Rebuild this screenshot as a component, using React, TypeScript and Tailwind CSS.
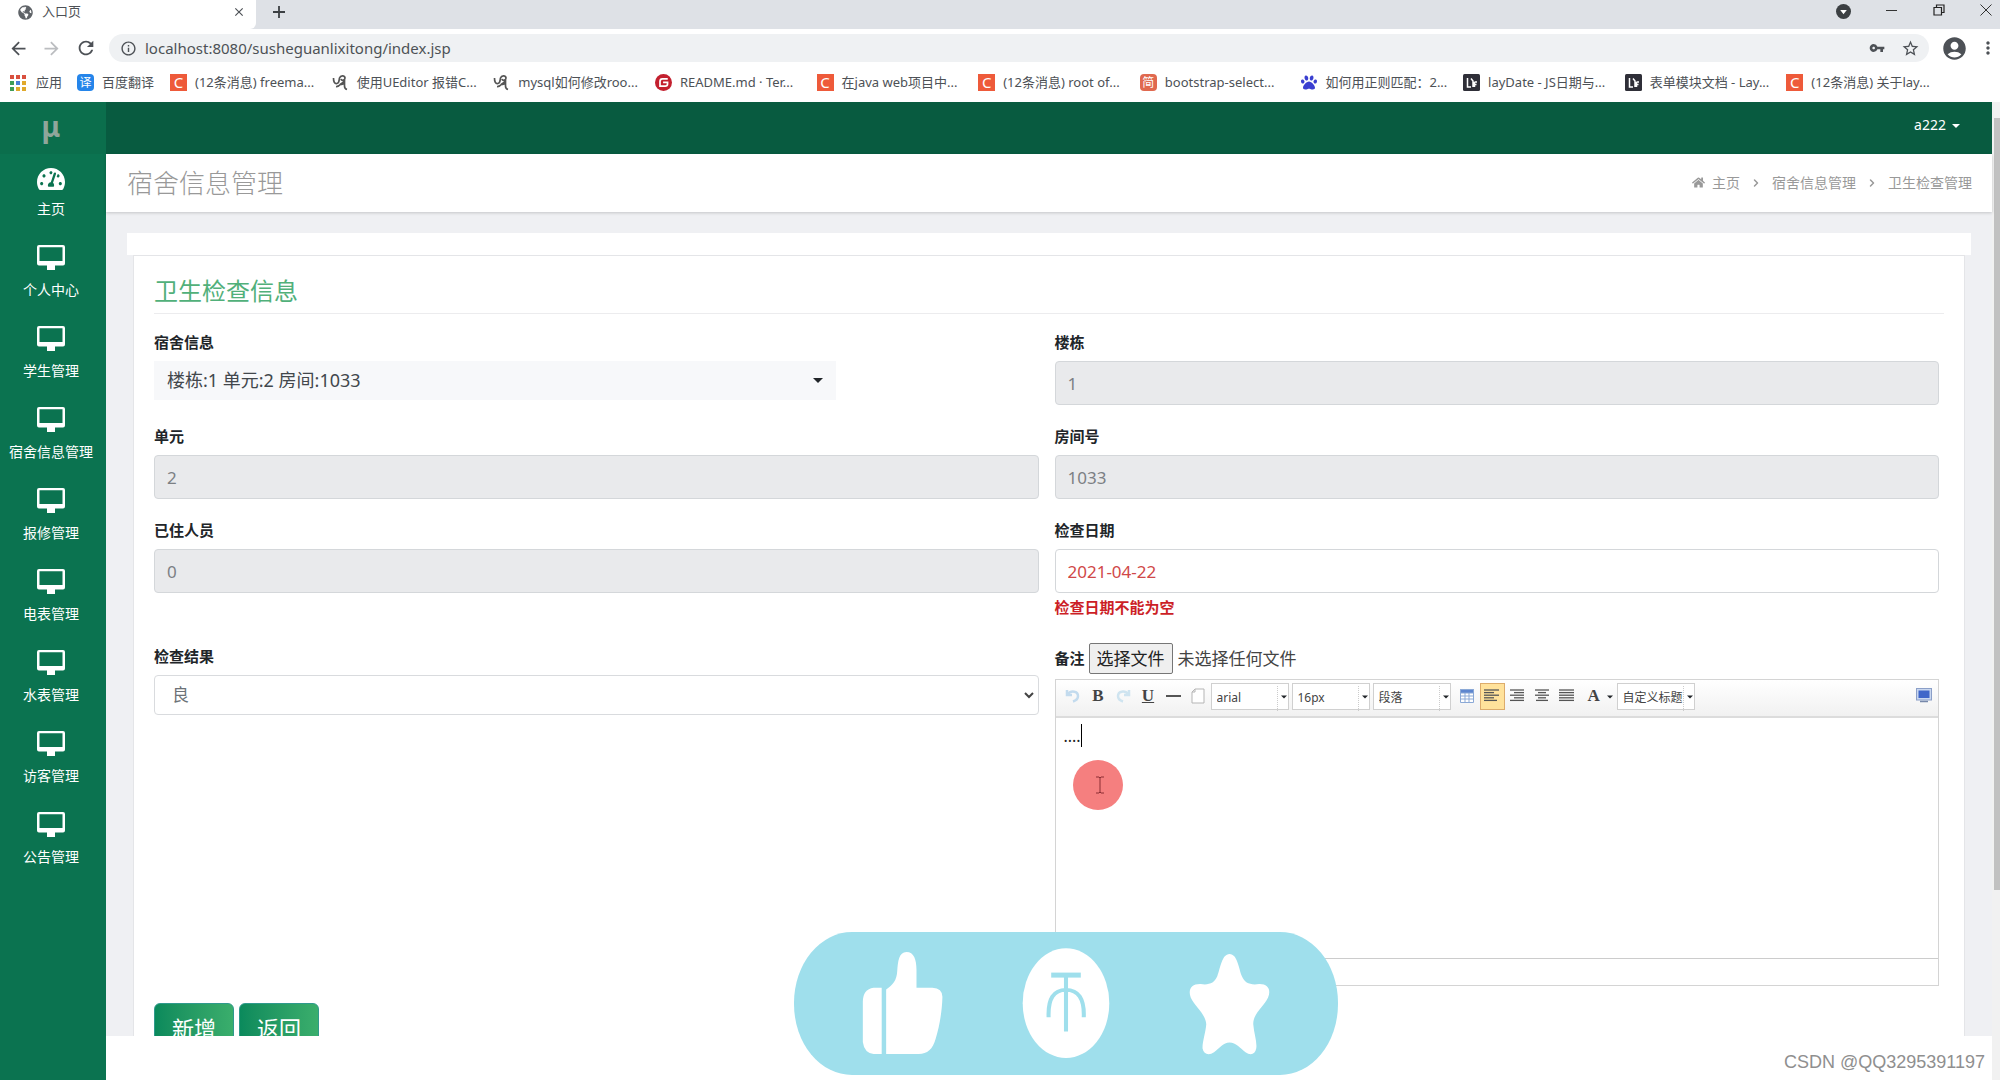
import {
  FaHome,
  FaPaw,
  FaTachometerAlt,
  FaGlobeAmericas,
} from "react-icons/fa";
import {
  MdAccountCircle,
  MdArrowBack,
  MdArrowForward,
  MdClose,
  MdInfoOutline,
  MdMoreVert,
  MdRefresh,
  MdStarBorder,
  MdVpnKey,
} from "react-icons/md";
import { ChevronRight } from "lucide-react";

const bookmarks = [
  { icon: "c", text: "(12条消息) freema..." },
  { icon: "ue", text: "使用UEditor 报错C..." },
  { icon: "ue", text: "mysql如何修改roo..." },
  { icon: "gitee", text: "README.md · Ter..." },
  { icon: "c", text: "在java web项目中..." },
  { icon: "c", text: "(12条消息) root of..." },
  { icon: "jian", text: "bootstrap-select..." },
  { icon: "paw", text: "如何用正则匹配：2..." },
  { icon: "lay", text: "layDate - JS日期与..." },
  { icon: "lay", text: "表单模块文档 - Lay..." },
  { icon: "c", text: "(12条消息) 关于lay..." },
];

const menu = [
  "主页",
  "个人中心",
  "学生管理",
  "宿舍信息管理",
  "报修管理",
  "电表管理",
  "水表管理",
  "访客管理",
  "公告管理",
];

const appDots = [
  "bg-[#d9503f]", "bg-[#d9503f]", "bg-[#d9503f]",
  "bg-[#3f9d58]", "bg-[#4a7fd8]", "bg-[#e0a92c]",
  "bg-[#3f9d58]", "bg-[#e0a92c]", "bg-[#e0a92c]",
];

const labelClass = "block h-5 text-[15px] leading-5 font-bold text-[#212529]";
const inputClass =
  "mt-[9px] block h-[44px] w-full rounded border border-[#d4d7da] px-3 text-[17px] outline-none";

function BookmarkIcon({ type }: { type: string }) {
  if (type === "c")
    return <span className="flex h-[17px] w-[17px] shrink-0 items-center justify-center bg-[#ee5a3a] text-[15px] leading-none text-white">C</span>;
  if (type === "jian")
    return <span className="flex h-[17px] w-[17px] shrink-0 items-center justify-center rounded-sm bg-[#e0694f] text-xs leading-none text-white">简</span>;
  if (type === "gitee")
    return (
      <svg viewBox="0 0 16 16" className="h-[17px] w-[17px] shrink-0">
        <circle cx="8" cy="8" r="8" fill="#c3202f" />
        <path d="M12 4.6H7Q4.7 4.6 4.7 7v4.4H9.6Q11.8 11.4 11.8 9.4V7.8H7.6" fill="none" stroke="#fff" strokeWidth="1.6" />
      </svg>
    );
  if (type === "paw") return <FaPaw className="h-[17px] w-4 shrink-0 text-[#3a3fd0]" />;
  if (type === "lay")
    return (
      <svg viewBox="0 0 17 17" className="h-[17px] w-[17px] shrink-0">
        <rect width="17" height="17" rx="1.5" fill="#2f2f38" />
        <path d="M4.500 4V13H8M8 4.500L10 7V13M11.500 8H14M11.500 8V13M11.500 10.500H13.500" fill="none" stroke="#fff" strokeWidth="1.500" />
      </svg>
    );
  return (
    <svg viewBox="0 0 17 17" className="h-[17px] w-[17px] shrink-0" fill="none" stroke="#555" strokeWidth="1.700">
      <path d="M1.500 4C1.500 8 2.500 10 5 9.500S7 6 7.500 4C8.500 1.500 12.500 1 13 4C13 6.500 9.500 7 9 5M4 12.500C8 13 9 9 12.500 7V12C12.500 14 13.500 15 15 15.500M8 9.500C9.500 11 11 10.500 12.500 9" />
    </svg>
  );
}

function Browser() {
  return (
    <header className="shrink-0 bg-white text-[#4d5156]">
      <div className="flex h-[29px] bg-[#dee1e6]">
        <div className="flex w-64 items-center rounded-br-md bg-white pr-[10px] pb-[5px] pl-[18px]">
          <FaGlobeAmericas className="h-[15px] w-[15px] text-[#5f6368]" />
          <span className="ml-[9px] flex-1 text-[13px]">入口页</span>
          <button aria-label="关闭标签页"><MdClose className="h-[14px] w-[14px]" /></button>
        </div>
        <button aria-label="新标签页" className="ml-4 pb-[5px]">
          <svg viewBox="0 0 14 14" className="h-[14px] w-[14px]" stroke="#3c4043" strokeWidth="1.800"><path d="M7 1V13M1 7H13" /></svg>
        </button>
        <div className="ml-auto flex items-center gap-[35px] pr-2 pb-[10px]">
          <svg viewBox="0 0 16 16" className="mt-1 h-[15px] w-[15px]"><circle cx="8" cy="8" r="8" fill="#3c4043" /><path d="M4.500 6.500H11.500L8 11Z" fill="#fff" /></svg>
          <svg viewBox="0 0 12 12" className="h-3 w-3" stroke="#333"><path d="M0 6.500H11" /></svg>
          <svg viewBox="0 0 12 12" className="h-3 w-3" fill="none" stroke="#222" strokeWidth="1.200"><path d="M1 3.500H8.500V11H1ZM3.500 3.500V1H11V8.500H8.500" /></svg>
          <svg viewBox="0 0 12 12" className="h-3 w-3" stroke="#333"><path d="M.5.5L11.500 11.500M11.500.5L.5 11.500" /></svg>
        </div>
      </div>
      <div className="flex h-[37px] items-center pt-px pr-[2px] pl-2">
        <MdArrowBack className="h-[21px] w-[21px]" />
        <MdArrowForward className="ml-3 h-[21px] w-[21px] text-[#bbbdc0]" />
        <MdRefresh className="ml-[13px] h-[22px] w-[22px]" />
        <div className="ml-3 flex h-7 flex-1 items-center rounded-full bg-[#eff1f3] pr-[9px] pl-[11px]">
          <MdInfoOutline className="h-[17px] w-[17px]" />
          <input
            aria-label="地址"
            readOnly
            value="localhost:8080/susheguanlixitong/index.jsp"
            className="ml-2 flex-1 bg-transparent text-[15px] outline-none"
          />
          <MdVpnKey className="h-4 w-4" />
          <MdStarBorder className="ml-4 h-[19px] w-[19px]" />
        </div>
        <MdAccountCircle className="ml-3 h-[27px] w-[27px]" />
        <MdMoreVert className="ml-[10px] h-5 w-5" />
      </div>
      <nav className="flex h-9 items-center pr-[52px] pb-[3px] pl-[10px] text-[13px]">
        <a href="#" className="flex w-[67px] items-center gap-[10px]">
          <span className="grid grid-cols-3 gap-[2px]">
            {appDots.map((c, i) => <i key={i} className={`h-1 w-1 ${c}`} />)}
          </span>
          应用
        </a>
        <a href="#" className="flex w-[93px] items-center gap-2">
          <span className="flex h-[17px] w-[17px] items-center justify-center rounded-sm bg-[#2585ea] text-xs text-white">译</span>
          百度翻译
        </a>
        <div className="grid flex-1 grid-cols-11">
          {bookmarks.map((b, i) => (
            <a key={i} href="#" className="flex items-center gap-2 whitespace-nowrap">
              <BookmarkIcon type={b.icon} />
              {b.text}
            </a>
          ))}
        </div>
      </nav>
    </header>
  );
}

function Sidebar() {
  return (
    <aside className="w-[106px] shrink-0 bg-[#0b7350] text-center text-white">
      <div className="flex h-[52px] items-center justify-center bg-[#0b6e4c] pr-1 pb-1 text-[28px] font-bold text-[#8fa69b]">μ</div>
      {menu.map((m, i) => (
        <a key={m} href="#" className="flex h-[81px] flex-col items-center pr-1 pt-[11px] text-[14px]">
          {i === 0 ? (
            <FaTachometerAlt className="h-[28px] w-[28px]" />
          ) : (
            <svg viewBox="0 2 28 28" className="h-[28px] w-[28px] overflow-visible" fill="currentColor">
              <path fillRule="evenodd" d="M2 1H26Q28 1 28 3V19.500Q28 21.500 26 21.500H18V26H10V21.500H2Q0 21.500 0 19.500V3Q0 1 2 1ZM2.500 3.200V17H25.500V3.200Z" />
            </svg>
          )}
          <span className="mt-[6px] leading-5">{m}</span>
        </a>
      ))}
    </aside>
  );
}

function Caret({ className = "" }: { className?: string }) {
  return <svg viewBox="0 0 10 5" className={`pointer-events-none absolute ${className}`} fill="#212529"><path d="M0 0H10L5 5Z" /></svg>;
}

function Field({ id, label, value }: { id: string; label: string; value: string }) {
  return (
    <div>
      <label htmlFor={id} className={labelClass}>{label}</label>
      <input id={id} readOnly value={value} className={`${inputClass} bg-[#e9eaec] text-[#7c8084]`} />
    </div>
  );
}

function ToolSelect({ label, value }: { label: string; value: string }) {
  return (
    <div className="relative h-[27px] w-[78px] border border-[#d0d0d0] bg-white">
      <select aria-label={label} className="h-full w-[66px] appearance-none overflow-hidden border-r border-dotted border-[#ccc] pl-[5px] text-xs text-[#444] outline-none">
        <option>{value}</option>
      </select>
      <Caret className="top-[11px] right-[1px] h-[4px] w-[6px]" />
    </div>
  );
}

function AlignIcon({ rows }: { rows: number[][] }) {
  return (
    <svg viewBox="0 0 16 13" className="h-[13px] w-4" stroke="#555" strokeWidth="1.300">
      {rows.map(([x1, x2], i) => <path key={i} d={`M${x1} ${1 + i * 2.6}H${x2}`} />)}
    </svg>
  );
}

const toolButton = "flex h-[25px] w-[25px] items-center justify-center text-[#444]";

function Editor() {
  return (
    <div className="relative mt-[5px] border border-[#d4d4d4] bg-white">
      <div className="flex h-[38px] border-b-2 border-[#dcdcdc] bg-gradient-to-b from-white to-[#f1f1f1] pt-[3px] pr-[2px] pl-[5px]">
        <button aria-label="撤销" className={toolButton}>
          <svg viewBox="0 0 16 16" className="h-4 w-4" fill="none" stroke="#c3dbee" strokeWidth="2.500"><path d="M2 2V7H7M2.500 6.500C6 2 13 3 13 8Q13 12 8 13.500" /></svg>
        </button>
        <button aria-label="加粗" className={`${toolButton} font-["Liberation_Serif",serif] text-[17px] font-bold`}>B</button>
        <button aria-label="重做" className={toolButton}>
          <svg viewBox="0 0 16 16" className="h-4 w-4" fill="none" stroke="#cfe4f0" strokeWidth="2.500"><path d="M14 2V7H9M13.500 6.500C10 2 3 3 3 8Q3 12 8 13.500" /></svg>
        </button>
        <button aria-label="下划线" className={`${toolButton} font-["Liberation_Serif",serif] text-[17px] font-bold underline`}>U</button>
        <button aria-label="分隔线" className={toolButton}><span className="h-[2px] w-[15px] bg-[#555]" /></button>
        <button aria-label="清空文档" className={toolButton}>
          <svg viewBox="0 0 14 16" className="h-4 w-[14px]" fill="#fff" stroke="#b5b5b5"><path d="M1 4L4 1H13V15H1ZM1 4H4V1" /></svg>
        </button>
        <div className="flex gap-[3px]">
          <ToolSelect label="字体" value="arial" />
          <ToolSelect label="字号" value="16px" />
          <ToolSelect label="段落格式" value="段落" />
        </div>
        <button aria-label="插入表格" className={`${toolButton} ml-1`}>
          <svg viewBox="0 0 14 14" className="h-[14px] w-[14px]" fill="#fff" stroke="#8ba9d6"><path d="M.5.5H13.500V13.500H.5ZM.5 7H13.500M.5 10H13.500M5 4V13.500M9 4V13.500" /><path d="M.5.5H13.500V4H.5Z" fill="#5d86cf" /></svg>
        </button>
        <button aria-label="居左对齐" className="flex h-[27px] w-[25px] items-start justify-center border border-[#dcac6c] bg-[#ffe29b] pt-[5px]">
          <AlignIcon rows={[[0, 15], [0, 10], [0, 15], [0, 10], [0, 13]]} />
        </button>
        <button aria-label="居右对齐" className={toolButton}>
          <AlignIcon rows={[[1, 15], [5, 15], [1, 15], [5, 15], [1, 15]]} />
        </button>
        <button aria-label="居中对齐" className={toolButton}>
          <AlignIcon rows={[[1, 15], [4, 12], [1, 15], [4, 12], [2, 14]]} />
        </button>
        <button aria-label="两端对齐" className={toolButton}>
          <AlignIcon rows={[[0, 15], [0, 15], [0, 15], [0, 15], [0, 15]]} />
        </button>
        <button aria-label="字体颜色" className='relative h-[25px] w-[37px] pl-2 text-left font-["Liberation_Serif",serif] text-[17px] leading-[25px] font-bold text-[#444]'>
          A
          <Caret className="top-[12px] right-[4px] h-[4px] w-[6px]" />
        </button>
        <ToolSelect label="自定义标题" value="自定义标题" />
        <button aria-label="全屏" className={`${toolButton} ml-auto`}>
          <svg viewBox="0 0 16 15" className="h-[15px] w-4"><rect x=".5" y=".5" width="15" height="11.500" fill="#c9d7ef" stroke="#8b9fc8" /><rect x="2.500" y="2.500" width="11" height="7.500" fill="#3f66c9" /><path d="M4 13.500H12" stroke="#7788aa" strokeWidth="1.500" /></svg>
        </button>
      </div>
      <textarea
        aria-label="备注内容"
        defaultValue="...."
        className="block h-[240px] w-full resize-none px-2 py-[6px] text-[16px] leading-6 text-[#222] outline-none"
      />
      <span className="absolute top-[44px] left-[25px] h-[23px] w-px bg-black" />
      <span className="absolute top-[80px] left-[17px] flex h-[50px] w-[50px] items-center justify-center rounded-full bg-[#f57f7f]">
        <svg viewBox="0 0 10 18" className="ml-1 h-[18px] w-[10px]" fill="none" stroke="#8c2f35"><path d="M1 1H4L5 2L6 1H9M5 2V16M1 17H4L5 16L6 17H9" /></svg>
      </span>
      <div className="h-[27px] border-t border-[#ccc]" />
    </div>
  );
}

const actionClass =
  "h-[50px] w-[80px] rounded-md border border-[#2f9a8c] bg-gradient-to-r from-[#0a8a5c] to-[#3aae6c] text-[22px] text-white";

function CheckForm() {
  return (
    <form className="mx-[6px] flex-1 border border-b-0 border-[#e4e5e8] bg-white px-5">
      <h2 className="mt-[17px] h-[41px] border-b border-[#ececee] text-[24px] leading-9 text-[#51b07a]">卫生检查信息</h2>
      <div className="mt-[18px] mr-[5px] grid grid-cols-2 gap-x-4 gap-y-[21px]">
        <div>
          <label htmlFor="room" className={labelClass}>宿舍信息</label>
          <div className="relative mt-[9px] w-[682px]">
            <select id="room" className="h-[39px] w-full appearance-none bg-[#f7f8fa] px-[13px] text-[18px] text-[#42474c] outline-none">
              <option>楼栋:1 单元:2 房间:1033</option>
            </select>
            <Caret className="top-[17px] right-[13px] h-[5px] w-[10px]" />
          </div>
        </div>
        <Field id="building" label="楼栋" value="1" />
        <Field id="unit" label="单元" value="2" />
        <Field id="number" label="房间号" value="1033" />
        <Field id="people" label="已住人员" value="0" />
        <div>
          <label htmlFor="date" className={labelClass}>检查日期</label>
          <input id="date" defaultValue="2021-04-22" className={`${inputClass} text-[#d04848]`} />
          <p className="mt-1 h-5 text-[15px] leading-5 font-bold text-[#cc1f27]">检查日期不能为空</p>
        </div>
        <div className="mt-2">
          <label htmlFor="result" className={labelClass}>检查结果</label>
          <div className="relative mt-[9px]">
            <select id="result" className="h-[40px] w-full appearance-none rounded border border-[#d9dbde] px-[17px] text-[17px] text-[#6c7277] outline-none">
              <option>良</option>
            </select>
            <svg viewBox="0 0 10 7" className="pointer-events-none absolute top-[17px] right-[5px] h-[7px] w-[10px]" fill="none" stroke="#444" strokeWidth="2"><path d="M1 1L5 5L9 1" /></svg>
          </div>
        </div>
        <div className="mt-[5px]">
          <div className="flex h-[31px] items-center">
            <span className="text-[15px] font-bold text-[#212529]">备注</span>
            <input id="file" type="file" className="sr-only" />
            <label htmlFor="file" className="ml-1 flex h-[31px] w-[84px] items-center justify-center rounded-xs border border-[#767676] bg-[#efefef] text-[17px] text-[#222]">选择文件</label>
            <span className="ml-[5px] text-[17px] text-[#444]">未选择任何文件</span>
          </div>
          <Editor />
        </div>
      </div>
      <div className="mt-[17px] flex gap-[5px]">
        <button type="button" className={actionClass}>新增</button>
        <button type="button" className={actionClass}>返回</button>
      </div>
    </form>
  );
}

function LikeBanner() {
  return (
    <div className="absolute bottom-[5px] left-[794px] h-[143px] w-[544px] rounded-[58px/71px] bg-[#9fdfec]">
      <svg viewBox="38 36 1470 428" preserveAspectRatio="none" className="h-full w-full" fill="#fff">
        <path d="M275 203H253Q224 208 224 245V365Q228 398 253 401H275Z" />
        <path d="M287 401V208C305 195 316 180 317 152C319 125 321 96 342 96C362 96 369 118 369 150V203H412Q440 205 439 232C438 270 432 315 421 355C413 388 398 401 375 401Z" />
        <ellipse cx="773" cy="249" rx="117" ry="164" />
        <g fill="none" stroke="#9fdfec">
          <path d="M733 165H813" strokeWidth="15" />
          <path d="M773 165V334M726 291C724 235 740 209 773 209S823 235 821 291" strokeWidth="11" />
        </g>
        <path d="M1215 102C1236 102 1240 145 1248 168C1256 190 1270 195 1295 192C1318 191 1328 209 1319 232C1309 258 1278 280 1279 312C1281 340 1290 365 1287 385C1284 402 1272 407 1258 396C1242 383 1233 367 1215 367S1190 383 1173 396C1159 407 1145 402 1142 385C1141 365 1150 340 1152 312C1150 280 1120 258 1110 232C1102 209 1112 191 1137 192C1160 195 1174 190 1182 168C1190 145 1194 102 1215 102Z" />
      </svg>
    </div>
  );
}

export default function App() {
  return (
    <div className='relative flex h-screen flex-col overflow-hidden bg-white font-["Noto_Sans","Noto_Sans_CJK_SC",sans-serif]'>
      <Browser />
      <div className="flex min-h-0 flex-1">
        <Sidebar />
        <div className="flex min-w-0 flex-1 flex-col">
          <div className="flex h-[52px] shrink-0 items-start justify-end bg-[#085b40] pt-3 pr-8">
            <button className="relative pr-[14px] text-[14px] text-white">
              a222
              <svg viewBox="0 0 8 4" className="absolute top-[10px] right-0 h-1 w-2" fill="#fff"><path d="M0 0H8L4 4Z" /></svg>
            </button>
          </div>
          <div className="z-10 flex h-[58px] shrink-0 items-center justify-between bg-white pr-5 pl-[21px] text-[#999] shadow-[0_1px_3px_rgba(0,0,0,0.18)]">
            <h1 className="text-[26px] font-light">宿舍信息管理</h1>
            <nav className="flex items-center pb-px text-[14px]">
              <FaHome className="mr-[7px] h-[13px] w-[13px]" />
              <a href="#">主页</a>
              <ChevronRight className="mx-[10px] h-3 w-3" strokeWidth={3} />
              <a href="#">宿舍信息管理</a>
              <ChevronRight className="mx-[10px] h-3 w-3" strokeWidth={3} />
              <a href="#">卫生检查管理</a>
            </nav>
          </div>
          <main className="flex min-h-0 flex-1 flex-col overflow-hidden bg-[#eff0f3] px-[21px] pt-[21px]">
            <div className="h-[22px] shrink-0 bg-white" />
            <CheckForm />
          </main>
          <footer className='flex h-[44px] shrink-0 items-center justify-end bg-white pt-2 pr-[7px] font-["Liberation_Sans",sans-serif] text-[18px] text-[#8f8f8f]'>
            CSDN @QQ3295391197
          </footer>
        </div>
        <div className="w-2 shrink-0 bg-[#f1f1f1] pt-4 pl-[2px]">
          <div className="h-[772px] bg-[#c1c1c1]" />
        </div>
      </div>
      <LikeBanner />
    </div>
  );
}
